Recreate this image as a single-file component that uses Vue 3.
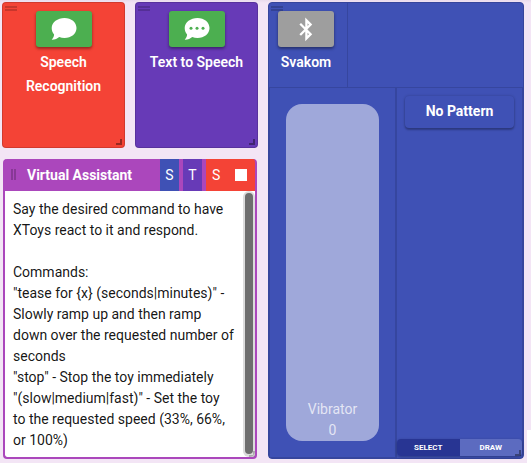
<script setup>
const message = [
  'Say the desired command to have',
  'XToys react to it and respond.',
  '',
  'Commands:',
  '"tease for {x} (seconds|minutes)" -',
  'Slowly ramp up and then ramp',
  'down over the requested number of',
  'seconds',
  '"stop" - Stop the toy immediately',
  '"(slow|medium|fast)" - Set the toy',
  'to the requested speed (33%, 66%,',
  'or 100%)',
].join('\n')
</script>

<template>
  <main class="board">
    <div class="left">
      <div class="pair">
        <section class="card red">
          <i class="grip"></i>
          <button class="tile green">
            <svg width="26" height="24" viewBox="0 0 26 24">
              <path fill="#fff" d="M13.5 1C20.300 1 25.500 5.300 25.500 11S20.300 21 13.500 21C11.600 21 9.800 20.700 8.200 20C6.400 21.600 3.800 22.800 0.700 22.700C2.100 21.300 3 19.600 3.100 17.500C1.500 15.800 .7 13.500 .7 11C.7 5.300 6.700 1 13.500 1Z" />
            </svg>
          </button>
          <div class="name">Speech<br />Recognition</div>
          <i class="corner"></i>
        </section>
        <section class="card purple">
          <i class="grip"></i>
          <button class="tile green">
            <svg width="26" height="24" viewBox="0 0 26 24">
              <path fill="#fff" d="M13.5 1C20.300 1 25.500 5.300 25.500 11S20.300 21 13.500 21C11.600 21 9.800 20.700 8.200 20C6.400 21.600 3.800 22.800 0.700 22.700C2.100 21.300 3 19.600 3.100 17.500C1.500 15.800 .7 13.500 .7 11C.7 5.300 6.700 1 13.500 1Z" />
              <g fill="#4caf50"><circle cx="7" cy="11.300" r="1.500" /><circle cx="13" cy="11.300" r="1.500" /><circle cx="19" cy="11.300" r="1.500" /></g>
            </svg>
          </button>
          <div class="name">Text to Speech</div>
          <i class="corner"></i>
        </section>
      </div>

      <section class="assistant">
        <header>
          <i class="vgrip"></i>
          <h2>Virtual Assistant</h2>
          <span class="tag blue">S</span>
          <span class="tag violet">T</span>
          <span class="stop"><b>S</b><i></i></span>
        </header>
        <div class="body">
          <p>{{ message }}</p>
          <div class="track"><div class="thumb"></div></div>
        </div>
        <i class="corner light"></i>
      </section>
    </div>

    <section class="toy">
      <i class="grip"></i>
      <div class="top">
        <div class="device">
          <button class="tile gray">
            <svg width="14" height="25" viewBox="0 0 14 25">
              <path fill="none" stroke="#fff" stroke-width="2.300" stroke-linejoin="miter" d="M1.200 6.800L11.600 17.200L7.400 21.400V3.400L11.600 7.600L1.200 18" />
            </svg>
          </button>
          <div class="name">Svakom</div>
        </div>
      </div>
      <div class="controls">
        <div class="channel">
          <div class="slider"><span>Vibrator</span><span>0</span></div>
        </div>
        <div class="pattern">
          <button class="none">No Pattern</button>
          <div class="modes"><span class="on">SELECT</span><span>DRAW</span></div>
        </div>
      </div>
      <i class="corner"></i>
    </section>
    <div class="edge"></div>
  </main>
</template>

<style>
body { margin: 0; background: #f3e5f5; overflow: hidden; }
</style>

<style scoped>
* { box-sizing: border-box; }
.board {
  position: relative;
  width: 531px;
  height: 463px;
  padding: 2px 7px 4px 2px;
  display: flex;
  gap: 10px;
  background: linear-gradient(#e9dbec, #f3e5f5 3px);
  font-family: Roboto, sans-serif;
  font-size: 14px;
  color: #fff;
}
button { border: 0; padding: 0; font: inherit; color: inherit; }
.left { width: 256px; display: flex; flex-direction: column; gap: 10px; }
.pair { display: flex; gap: 10px; height: 146px; }
.card {
  position: relative;
  width: 123px;
  padding-top: 8px;
  border: 1px solid rgba(0, 0, 0, .14);
  border-radius: 4px;
  display: flex;
  flex-direction: column;
  align-items: center;
}
.red { background: #f44336; }
.purple { background: #673ab7; }
.tile {
  width: 56px;
  height: 36px;
  flex: none;
  border-radius: 3px;
  display: flex;
  align-items: center;
  justify-content: center;
  box-shadow: 0 2px 3px rgba(0, 0, 0, .28), 0 1px 3px rgba(0, 0, 0, .18);
  position: relative;
}
.green { background: #4caf50; }
.gray { background: #9e9e9e; }
.name {
  margin-top: 3px;
  font-weight: 600;
  line-height: 24px;
  text-align: center;
  white-space: nowrap;
}
.grip {
  position: absolute;
  left: 2px;
  top: 3px;
  width: 12px;
  height: 5px;
  border: solid rgba(0, 0, 0, .18);
  border-width: 2px 0;
}
.corner {
  position: absolute;
  right: 2px;
  bottom: 2px;
  width: 6px;
  height: 6px;
  border: solid rgba(0, 0, 0, .38);
  border-width: 0 2px 2px 0;
}
.assistant {
  position: relative;
  flex: 1;
  margin: 1px 1px 0;
  border: 2px solid #ab47bc;
  border-top: 0;
  border-radius: 4px;
  background: #ab47bc;
  overflow: hidden;
  display: flex;
  flex-direction: column;
}
.assistant header {
  display: flex;
  height: 32px;
  flex: none;
  align-items: stretch;
  margin-right: -2px;
  line-height: 32px;
}
.vgrip {
  width: 5px;
  height: 11px;
  margin: 10px 0 0 6px;
  border: solid rgba(0, 0, 0, .2);
  border-width: 0 2px;
}
h2 { flex: 1; margin: 0 0 0 11px; font-size: 14px; font-weight: 700; white-space: nowrap; }
.tag { width: 19px; margin-right: 4px; text-align: center; }
.blue { background: #3f51b5; }
.violet { background: #673ab7; }
.stop {
  width: 51px;
  padding: 0 10px 0 6px;
  background: #f44336;
  display: flex;
  align-items: center;
  justify-content: space-between;
}
.stop b { font-weight: 400; }
.stop i { width: 12px; height: 12px; background: #fff; }
.body { flex: 1; display: flex; background: #fff; border-radius: 0 0 2px 2px; min-height: 0; }
.body p {
  flex: 1;
  margin: 0;
  padding: 8px 0 0 8px;
  line-height: 21px;
  white-space: pre;
  color: rgba(0, 0, 0, .92);
}
.track { width: 12px; background: #dcdcdc; padding: 2px; border-radius: 6px; }
.thumb { height: 261px; width: 8px; background: #6e6e6e; border-radius: 4px; }
.light { right: 0; bottom: 0; border-color: rgba(0, 0, 0, .22); }
.toy {
  position: relative;
  width: 256px;
  border: 1px solid #36459c;
  border-radius: 4px;
  background: #3f51b5;
  display: flex;
  flex-direction: column;
}
.top { height: 85px; border-bottom: 1px solid #36469f; flex: none; }
.device {
  width: 79px;
  height: 84px;
  padding: 8px 0 0 9px;
  border-right: 1px solid #36469f;
}
.device .name { width: 56px; }
.controls { flex: 1; display: flex; min-height: 0; }
.channel {
  width: 128px;
  padding: 16px 16px 17px;
  border: solid #36469f;
  border-width: 0 2px 1px 1px;
}
.slider {
  width: 93px;
  height: 337px;
  border-radius: 16px;
  background: #9fa8da;
  color: rgba(255, 255, 255, .72);
  line-height: 21px;
  display: flex;
  flex-direction: column;
  align-items: center;
  justify-content: flex-end;
}
.pattern {
  flex: 1;
  border-right: 1px solid #36469f;
  display: flex;
  flex-direction: column;
  justify-content: space-between;
  padding-bottom: 2px;
}
.none {
  width: 109px;
  height: 32px;
  padding-bottom: 2px;
  margin: 8px 0 0 8px;
  border-radius: 4px;
  background: #3f51b5;
  font-weight: 700;
  box-shadow: 0 2px 2px rgba(0, 0, 0, .25), 0 0 3px rgba(0, 0, 0, .2);
}
.modes {
  height: 17px;
  display: flex;
  border-radius: 4px;
  overflow: hidden;
  font-size: 8px;
  font-weight: 700;
  line-height: 17px;
  text-align: center;
  box-shadow: 0 1px 3px rgba(0, 0, 0, .3);
}
.modes span { flex: 1; background: #5c6bc0; }
.modes .on { background: #283593; }
.edge { position: absolute; right: 0; bottom: 0; width: 4px; height: 33px; background: #fff; }
</style>
